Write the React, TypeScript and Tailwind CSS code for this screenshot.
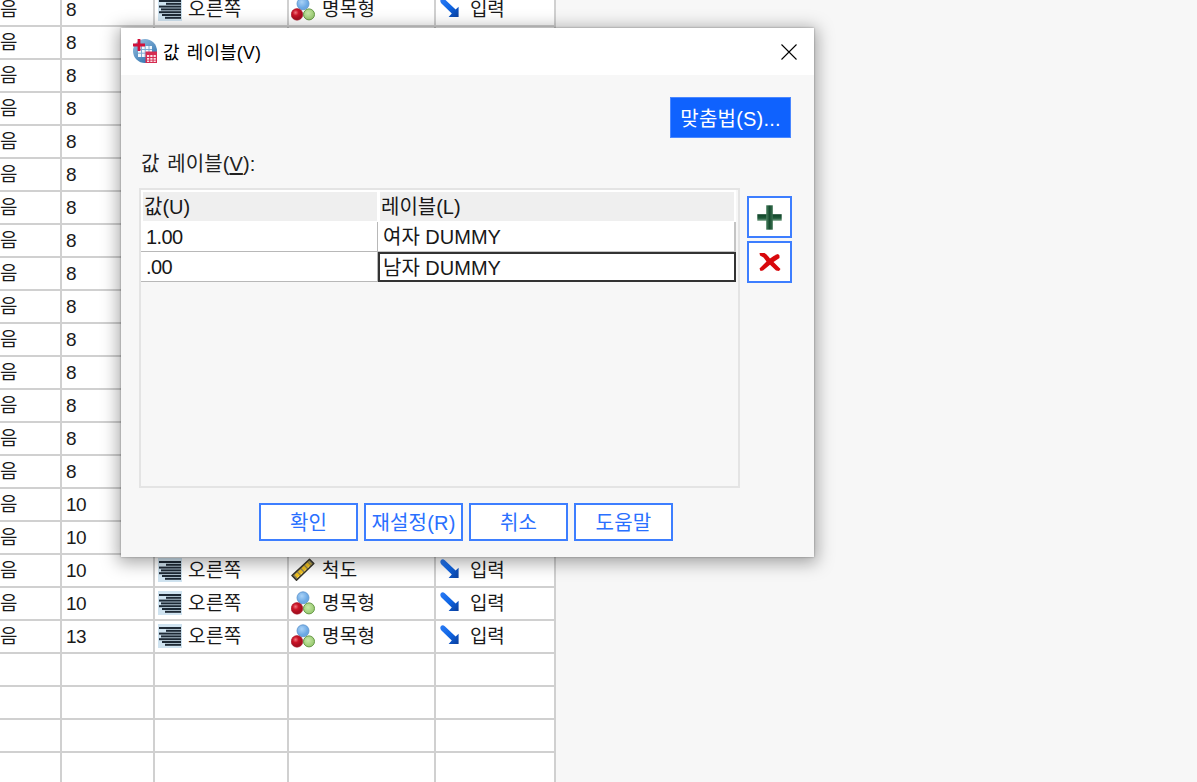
import { useState } from "react";
import type { ReactNode } from "react";

type Variable = {
  width?: string;
  measure?: "nominal" | "scale";
};

const nominal = (width: string): Variable => ({ width, measure: "nominal" });

const variables: Variable[] = [
  ...Array.from({ length: 15 }, () => nominal("8")),
  nominal("10"),
  nominal("10"),
  { width: "10", measure: "scale" },
  nominal("10"),
  nominal("13"),
  {},
  {},
  {},
  {},
];

const valueLabels = [
  { value: "1.00", label: "여자 DUMMY" },
  { value: ".00", label: "남자 DUMMY" },
];

const AlignRightIcon = () => (
  <svg width="24" height="24" viewBox="0 0 24 24" className="shrink-0">
    <rect width="24" height="24" fill="#cfe3f0" />
    <g fill="#1d2935">
      <rect x="1" y="3" width="22" height="2" />
      <rect x="8" y="5.8" width="15" height="2" />
      <rect x="1" y="8.6" width="22" height="2" />
      <rect x="3" y="11.4" width="20" height="2" />
      <rect x="1" y="14.2" width="22" height="2" />
      <rect x="4" y="17" width="19" height="2" />
      <rect x="7" y="19.8" width="16" height="2" />
    </g>
  </svg>
);

const NominalIcon = () => (
  <svg width="24" height="24" viewBox="0 0 24 24" className="shrink-0">
    <defs>
      <radialGradient id="ballBlue" cx="0.4" cy="0.35">
        <stop offset="0" stopColor="#a9d2f7" />
        <stop offset="1" stopColor="#6ba8e4" />
      </radialGradient>
      <radialGradient id="ballRed" cx="0.38" cy="0.35">
        <stop offset="0" stopColor="#f07880" />
        <stop offset="0.5" stopColor="#cc1428" />
        <stop offset="1" stopColor="#a80f20" />
      </radialGradient>
      <radialGradient id="ballGreen" cx="0.42" cy="0.4">
        <stop offset="0" stopColor="#c9e8a8" />
        <stop offset="1" stopColor="#9fce78" />
      </radialGradient>
    </defs>
    <circle cx="12" cy="6.8" r="6" fill="url(#ballBlue)" stroke="#5a92cc" strokeWidth="0.8" />
    <circle cx="6" cy="17.4" r="5.8" fill="url(#ballRed)" stroke="#a31626" strokeWidth="0.6" />
    <circle cx="18" cy="17.4" r="5.5" fill="url(#ballGreen)" stroke="#659846" strokeWidth="1" />
  </svg>
);

const ScaleIcon = () => (
  <svg width="24" height="24" viewBox="0 0 24 24" className="shrink-0">
    <path d="M1 17.5 18.5 1.2 22.8 5.5 5.5 22.3Z" fill="#8c8560" stroke="#35332a" strokeWidth="1.5" strokeLinejoin="round" />
    <path d="M5 18.5 19.3 4.8" stroke="#f2c11d" strokeWidth="4.2" strokeDasharray="3.6 1.2" />
    <path d="M6.4 19.6 20.4 6.2" stroke="#fae27a" strokeWidth="0.9" strokeDasharray="2 2.8" />
  </svg>
);

const InputArrowIcon = () => (
  <svg width="20" height="20" viewBox="0 0 20 20" className="shrink-0">
    <defs>
      <linearGradient id="arrow" x1="0" y1="0" x2="1" y2="1">
        <stop offset="0" stopColor="#2d7cf4" />
        <stop offset="0.5" stopColor="#0f66e6" />
        <stop offset="1" stopColor="#0a3f9c" />
      </linearGradient>
    </defs>
    <path d="M1 1Q2.8-.4 4.8 1.3L15.6 11.6 18.6 8.7V19H8.6L11.8 15.6 1.2 5.2Q-.5 2.8 1 1Z" fill="url(#arrow)" />
  </svg>
);

const AppIcon = () => (
  <svg width="24" height="24" viewBox="0 0 24 24" className="shrink-0">
    <defs>
      <linearGradient id="globe" x1="0" y1="0" x2="0.7" y2="1">
        <stop offset="0" stopColor="#9fc4e2" />
        <stop offset="1" stopColor="#2f73b0" />
      </linearGradient>
    </defs>
    <circle cx="12" cy="12" r="12" fill="url(#globe)" />
    <path d="M5 7h14v11H5z" fill="#f3f8fc" />
    <path d="M5 10.5h14M5 14.2h14M8.5 7v11M12.2 7v11M16 7v11" stroke="#7fabd2" strokeWidth="1" />
    <path d="M0 6h12M6 0v12" stroke="#d0103a" strokeWidth="2.8" />
    <path d="M12.5 12.5h11.5V24H12.5z" fill="#d52b50" />
    <path d="M14 16h2.2v2H14zM17.3 16h2.2v2h-2.2zM20.6 16h2.2v2h-2.2zM14 19h2.2v1.8H14zM17.3 19h2.2v1.8h-2.2zM20.6 19h2.2v1.8h-2.2zM14 21.6h2.2V23H14zM17.3 21.6h2.2V23h-2.2zM20.6 21.6h2.2V23h-2.2z" fill="#fbdfe5" />
  </svg>
);

const PlusIcon = () => (
  <svg width="25" height="25" viewBox="0 0 25 25">
    <defs>
      <linearGradient id="plusV">
        <stop offset="0" stopColor="#4a8060" />
        <stop offset="0.5" stopColor="#174d30" />
        <stop offset="1" stopColor="#3a7050" />
      </linearGradient>
      <linearGradient id="plusH" x2="0" y2="1">
        <stop offset="0" stopColor="#0f4428" />
        <stop offset="0.6" stopColor="#205a3a" />
        <stop offset="1" stopColor="#79a188" />
      </linearGradient>
    </defs>
    <rect x="0.3" y="9.2" width="24.4" height="6.6" fill="url(#plusH)" />
    <rect x="9.2" y="0.3" width="6.6" height="24.4" fill="url(#plusV)" />
  </svg>
);

const DeleteIcon = () => (
  <svg width="22" height="20" viewBox="0 0 22 20">
    <path d="M0.5 1 5.5 1Q8.5 3 11 6.5 15 3 19 2L20.5 3.5V6L14.5 10 21.5 17 20 19 17 18.5 11 12.8 4 18.5 1.5 19 .5 16.5 7.5 9.5 4.5 5.5 1 3.5Z" fill="#d8080c" />
  </svg>
);

const CloseIcon = () => (
  <svg width="16" height="16" viewBox="0 0 16 16">
    <path d="M.5.5l15 15M15.5.5l-15 15" stroke="#000" strokeWidth="1.1" />
  </svg>
);

function VariableRow({ width, measure }: Variable) {
  const cell = "flex h-full shrink-0 items-center border-r-2 border-[#d0d0d0]";
  return (
    <div className="flex h-[33px] w-[556px] shrink-0 border-b-2 border-[#d0d0d0] bg-white text-[19px] leading-none text-[#1a1a1a]">
      <div className={`${cell} w-[62px]`}>
        {width && <span>음</span>}
      </div>
      <div className={`${cell} w-[93px] pb-px pl-[4px] tracking-[-0.5px]`}>{width}</div>
      <div className={`${cell} w-[134px] gap-[6px] pb-[2px] pl-[3px]`}>
        {width && (
          <>
            <AlignRightIcon />
            <span className="pt-[2px] tracking-[0.4px]">오른쪽</span>
          </>
        )}
      </div>
      <div className={`${cell} w-[147px] gap-[7px] pb-[2px] pl-[2px]`}>
        {measure && (
          <>
            {measure === "scale" ? <ScaleIcon /> : <NominalIcon />}
            <span className="pt-[2px] tracking-[0.3px]">{measure === "scale" ? "척도" : "명목형"}</span>
          </>
        )}
      </div>
      <div className={`${cell} w-[120px] gap-[10px] pb-[4px] pl-[4px]`}>
        {width && (
          <>
            <InputArrowIcon />
            <span className="pt-[4px] tracking-[-0.2px]">입력</span>
          </>
        )}
      </div>
    </div>
  );
}

function DialogButton({ children }: { children: ReactNode }) {
  return (
    <button className="flex h-[38px] w-[99px] items-center justify-center border-2 border-[#3d7eff] bg-white pt-[2px] text-[20px] leading-none tracking-[0.2px] whitespace-nowrap text-[#2a70ff]">
      {children}
    </button>
  );
}

function ValueLabelsDialog() {
  const [selected, setSelected] = useState(1);

  return (
    <div className="absolute top-[28px] left-[121px] flex h-[529px] w-[693px] flex-col bg-[#f7f7f7] shadow-[0_3px_16px_3px_rgba(0,0,0,0.34),0_0_2px_rgba(0,0,0,0.35)]">
      <div className="flex h-[47px] shrink-0 items-center justify-between bg-white pr-[17px] pl-[12px]">
        <div className="flex items-center gap-[6px] pb-px">
          <AppIcon />
          <h1 className="pt-[4px] text-[18px] leading-none tracking-[0.1px] text-black [word-spacing:2px]">
            값 레이블(V)
          </h1>
        </div>
        <button aria-label="닫기">
          <CloseIcon />
        </button>
      </div>

      <div className="flex justify-end pt-[22px] pr-[23px]">
        <button className="flex h-[41px] w-[121px] items-center justify-center border border-[#4a87ff] bg-[#0f62fe] pt-[2px] text-[20px] leading-none tracking-[0.2px] whitespace-nowrap text-white">
          맞춤법(S)...
        </button>
      </div>

      <p className="mt-[11px] pl-[20px] text-[20px] leading-[30px] tracking-[0.1px] text-[#222] [word-spacing:2px]">
        값 레이블(<span className="underline underline-offset-2">V</span>):
      </p>

      <div className="mt-[9px] flex gap-[7px] pl-[18px]">
        <div className="h-[300px] w-[601px] border-2 border-[#e4e4e4] text-[20px] leading-none text-[#181818]">
          <div className="flex h-[32px] w-[595px] gap-[3px] bg-white p-[2px] pb-px">
            <div className="flex w-[234px] items-center bg-[#efefef] pt-px pl-[1px]">값(U)</div>
            <div className="flex flex-1 items-center bg-[#efefef] pt-px pl-[1px]">레이블(L)</div>
          </div>
          {valueLabels.map((row, i) => (
            <div key={row.value} onClick={() => setSelected(i)} className="flex h-[30px] w-[595px] bg-white">
              <div className="flex w-[237px] items-center border-r border-b border-[#b8b8b8] pl-[5px] tracking-[-0.6px]">
                {row.value}
              </div>
              <div
                className={
                  selected === i
                    ? "flex flex-1 items-center border-2 border-[#333] pt-px pl-[3px]"
                    : "flex flex-1 items-center border-r-2 border-b border-[#c4c4c4] pl-[5px]"
                }
              >
                {row.label}
              </div>
            </div>
          ))}
        </div>
        <div className="flex flex-col gap-[3px] pt-[8px]">
          <button aria-label="추가" className="flex h-[42px] w-[45px] items-center justify-center border-2 border-[#3d7eff] bg-white">
            <PlusIcon />
          </button>
          <button aria-label="삭제" className="flex h-[42px] w-[45px] items-center justify-center border-2 border-[#3d7eff] bg-white">
            <DeleteIcon />
          </button>
        </div>
      </div>

      <div className="mt-[15px] flex gap-[6px] pl-[138px]">
        <DialogButton>확인</DialogButton>
        <DialogButton>재설정(R)</DialogButton>
        <DialogButton>취소</DialogButton>
        <DialogButton>도움말</DialogButton>
      </div>
    </div>
  );
}

export default function App() {
  return (
    <div className="relative h-screen overflow-hidden bg-[#f7f7f7] font-['Liberation_Sans','Noto_Sans_CJK_KR',sans-serif]">
      <div className="-mt-[6px] flex flex-col">
        {variables.map((variable, i) => (
          <VariableRow key={i} {...variable} />
        ))}
      </div>
      <ValueLabelsDialog />
    </div>
  );
}
